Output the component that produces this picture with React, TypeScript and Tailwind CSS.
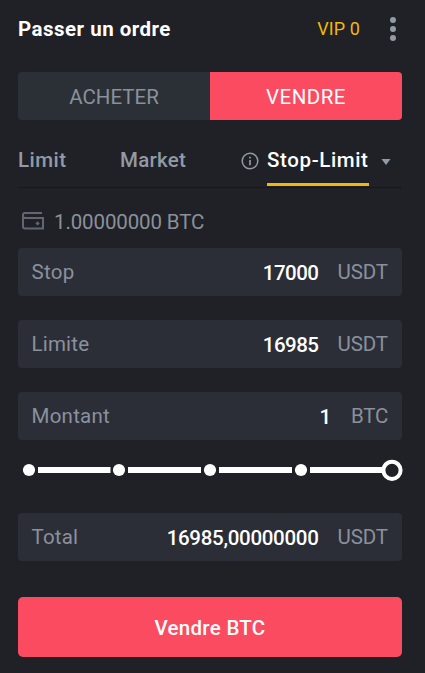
import React from "react";

type FieldProps = {
  label: string;
  labelClass: string;
  value: string;
  valueClass: string;
  unit: string;
  unitClass: string;
};

function Field({ label, labelClass, value, valueClass, unit, unitClass }: FieldProps) {
  return (
    <div className="flex h-12 items-center rounded-[4px] bg-[#2b2e37] pr-[14px] pl-[13.5px] text-[#8a919d]">
      <span className={labelClass}>{label}</span>
      <span className={`ml-auto pt-px font-medium text-white ${valueClass}`}>{value}</span>
      <span className={`shrink-0 ${unitClass}`}>{unit}</span>
    </div>
  );
}

function Slider() {
  return (
    <svg className="block h-6 w-full overflow-visible" viewBox="0 0 384 24" fill="none">
      <path d="M20 12H92.5M110 12H183M201 12H274M292 12H366" stroke="#fff" strokeWidth="6" />
      <circle cx="11" cy="12" r="6.1" fill="#fff" />
      <circle cx="101" cy="12" r="6.1" fill="#fff" />
      <circle cx="192" cy="12" r="6.1" fill="#fff" />
      <circle cx="283" cy="12" r="6.1" fill="#fff" />
      <circle cx="374" cy="12.3" r="8.6" stroke="#fff" strokeWidth="4" />
    </svg>
  );
}

export default function App() {
  return (
    <div className="h-[673px] w-[425px] bg-[#202126] pr-[23px] pl-[18px] font-['Roboto','Liberation_Sans',sans-serif] text-[20.5px] leading-6 whitespace-nowrap">
      <div className="flex h-[72px] items-start pt-[17px]">
        <h1 className="text-[20.5px] font-bold tracking-[0.48px] text-white">Passer un ordre</h1>
        <span className="ml-auto text-[18px] tracking-[0.1px] text-[#f0b90b]">VIP 0</span>
        <svg className="mr-[6px] ml-[30px] h-6 w-[6px]" viewBox="0 0 6 24" fill="#929aa5">
          <circle cx="3" cy="3" r="3" />
          <circle cx="3" cy="12" r="3" />
          <circle cx="3" cy="21" r="3" />
        </svg>
      </div>

      <div className="flex h-12 overflow-hidden rounded-[4px] text-center leading-[50px]">
        <div className="w-48 bg-[#2b3036] text-[#8a919d]">ACHETER</div>
        <div className="w-48 bg-[#fb4b61] tracking-[0.45px] text-white">VENDRE</div>
      </div>

      <div className="flex h-[68px] items-stretch border-b border-[#17181c] pt-[28px] pb-px font-medium text-[#929aa5]">
        <span className="w-[102px] tracking-[0.45px]">Limit</span>
        <span className="w-[121px] tracking-[0.25px]">Market</span>
        <svg className="mt-[4px] h-[18px] w-[18px]" viewBox="0 0 18 18" fill="none" stroke="#929aa5" strokeWidth="1.5">
          <circle cx="9" cy="9" r="7.8" />
          <path d="M9 8V13.2M9 4.7V6.4" strokeWidth="1.7" />
        </svg>
        <span className="ml-[8px] w-[102px] border-b-[3px] border-[#f0b90b] tracking-[0.62px] text-white">Stop-Limit</span>
        <svg className="mt-[11px] ml-[12px] h-[6px] w-[10px]" viewBox="0 0 10 6" fill="#929aa5">
          <path d="M0.5 0H9.5L5 6Z" />
        </svg>
      </div>

      <div className="flex h-[60px] pt-[22px] text-[#8a919d]">
        <svg className="mt-px ml-[3px] h-[20px] w-[24px]" viewBox="0 0 24 20" fill="none" stroke="#606773" strokeWidth="2">
          <path d="M21 2H3.8C2.3 2 2 2.8 2 4.2V15.5C2 17 2.5 17.5 4 17.5H22V7H4C2.6 7 2 6 2 4.5" />
          <path d="M16.6 10.2L18.8 12.4L16.6 14.6L14.4 12.4Z" fill="#606773" stroke="none" />
        </svg>
        <span className="ml-[9px] tracking-[-0.12px]">1.00000000 BTC</span>
      </div>

      <div className="flex flex-col gap-6">
        <Field label="Stop" labelClass="tracking-[0.3px]" value="17000" valueClass="mr-[19px] tracking-[-0.5px]" unit="USDT" unitClass="tracking-[-0.1px]" />
        <Field label="Limite" labelClass="tracking-[0.2px]" value="16985" valueClass="mr-[19px] tracking-[-0.5px]" unit="USDT" unitClass="tracking-[-0.1px]" />
        <Field label="Montant" labelClass="tracking-[0.25px]" value="1" valueClass="mr-[20px]" unit="BTC" unitClass="tracking-[-0.3px]" />
      </div>

      <div className="h-[73px] pt-[18px]">
        <Slider />
      </div>

      <Field label="Total" labelClass="tracking-[0.2px]" value="16985,00000000" valueClass="mr-[19px] tracking-[-0.3px]" unit="USDT" unitClass="tracking-[-0.1px]" />

      <button className="mt-9 block h-[60px] w-full rounded-[5px] bg-[#fb4b61] pt-px text-center font-medium tracking-[0.3px] text-white">
        Vendre BTC
      </button>
    </div>
  );
}
